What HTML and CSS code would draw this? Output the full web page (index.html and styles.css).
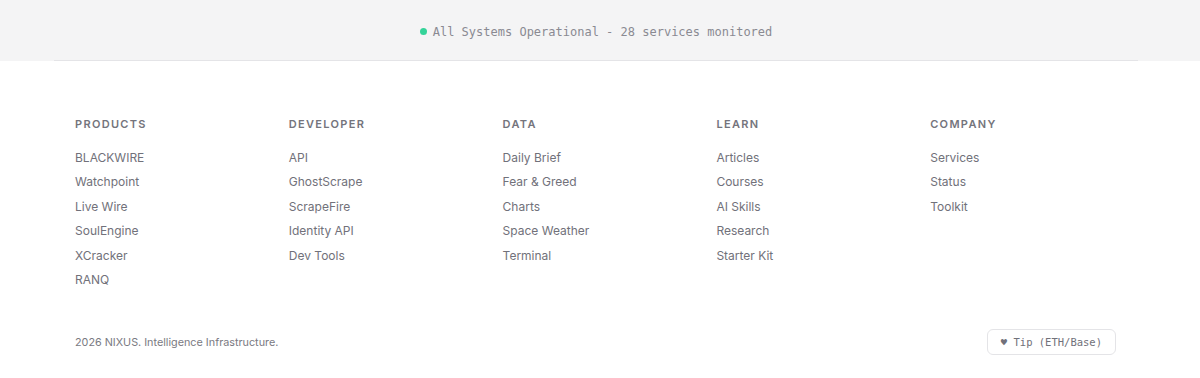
FILE: index.html
```html
<!DOCTYPE html>
<html lang="en">
  <head>
    <meta charset="UTF-8" />
    <meta name="viewport" content="width=device-width, initial-scale=1.0" />
    <title>NIXUS Footer</title>
    <link rel="stylesheet" href="styles.css">
  </head>
  <body>
    <div class="status-bar">
      <div class="status-inner">
        <span class="status-dot"></span>
        <span class="status-text">All Systems Operational - 28 services monitored</span>
      </div>
    </div>
    <footer class="footer">
      <div class="footer-columns">
        <div class="footer-col">
          <h4 class="col-title">PRODUCTS</h4>
          <ul class="col-links">
            <li><a href="#">BLACKWIRE</a></li>
            <li><a href="#">Watchpoint</a></li>
            <li><a href="#">Live Wire</a></li>
            <li><a href="#">SoulEngine</a></li>
            <li><a href="#">XCracker</a></li>
            <li><a href="#">RANQ</a></li>
          </ul>
        </div>
        <div class="footer-col">
          <h4 class="col-title">DEVELOPER</h4>
          <ul class="col-links">
            <li><a href="#">API</a></li>
            <li><a href="#">GhostScrape</a></li>
            <li><a href="#">ScrapeFire</a></li>
            <li><a href="#">Identity API</a></li>
            <li><a href="#">Dev Tools</a></li>
          </ul>
        </div>
        <div class="footer-col">
          <h4 class="col-title">DATA</h4>
          <ul class="col-links">
            <li><a href="#">Daily Brief</a></li>
            <li><a href="#">Fear &amp; Greed</a></li>
            <li><a href="#">Charts</a></li>
            <li><a href="#">Space Weather</a></li>
            <li><a href="#">Terminal</a></li>
          </ul>
        </div>
        <div class="footer-col">
          <h4 class="col-title">LEARN</h4>
          <ul class="col-links">
            <li><a href="#">Articles</a></li>
            <li><a href="#">Courses</a></li>
            <li><a href="#">AI Skills</a></li>
            <li><a href="#">Research</a></li>
            <li><a href="#">Starter Kit</a></li>
          </ul>
        </div>
        <div class="footer-col">
          <h4 class="col-title">COMPANY</h4>
          <ul class="col-links">
            <li><a href="#">Services</a></li>
            <li><a href="#">Status</a></li>
            <li><a href="#">Toolkit</a></li>
          </ul>
        </div>
      </div>
      <div class="footer-bottom">
        <p class="copyright">2026 NIXUS. Intelligence Infrastructure.</p>
        <button class="tip-button">&#9829; Tip (ETH/Base)</button>
      </div>
    </footer>
  </body>
</html>
```

FILE: styles.css
```css
body {
  margin: 0;
  padding: 0;
  font-family: Inter, "Noto Sans", sans-serif;
  background-color: #fff;
  color: #71717a;
}

.status-bar {
  background-color: #f4f4f5;
}

.status-inner {
  width: 1084px;
  margin: 0 62px 0 54px;
  height: 61px;
  padding-top: 3px;
  box-sizing: border-box;
  border-bottom: 1px solid #e4e4e7;
  display: flex;
  align-items: center;
  justify-content: center;
  gap: 6px;
}

.status-dot {
  width: 7px;
  height: 7px;
  border-radius: 50%;
  background-color: #34d399;
}

.status-text {
  font-family: "DejaVu Sans Mono", "Liberation Mono", monospace;
  font-size: 12px;
  color: #8a8a92;
}

.footer {
  width: 1084px;
  margin: 0 62px 0 54px;
  padding: 55px 22px 0 21px;
  box-sizing: border-box;
}

.footer-columns {
  display: grid;
  grid-template-columns: repeat(5, 1fr);
  column-gap: 28px;
}

.col-title {
  margin: 0 0 14px 0;
  font-size: 11px;
  line-height: 16px;
  font-weight: 600;
  letter-spacing: 0.12em;
  color: #74747c;
}

.col-links {
  list-style: none;
  margin: 0;
  padding: 0;
}

.col-links li {
  font-size: 12px;
  line-height: 24.4px;
}

.col-links a {
  color: #71717a;
  text-decoration: none;
}

.footer-bottom {
  margin-top: 37px;
  display: flex;
  justify-content: space-between;
  align-items: center;
}

.copyright {
  margin: 0;
  font-size: 10.8px;
  color: #7a7a82;
}

.tip-button {
  height: 26px;
  padding: 0 13px;
  background-color: #fff;
  border: 1px solid #e4e4e7;
  border-radius: 6px;
  font-family: "DejaVu Sans Mono", "Liberation Mono", monospace;
  font-size: 10.5px;
  color: #71717a;
}
```
